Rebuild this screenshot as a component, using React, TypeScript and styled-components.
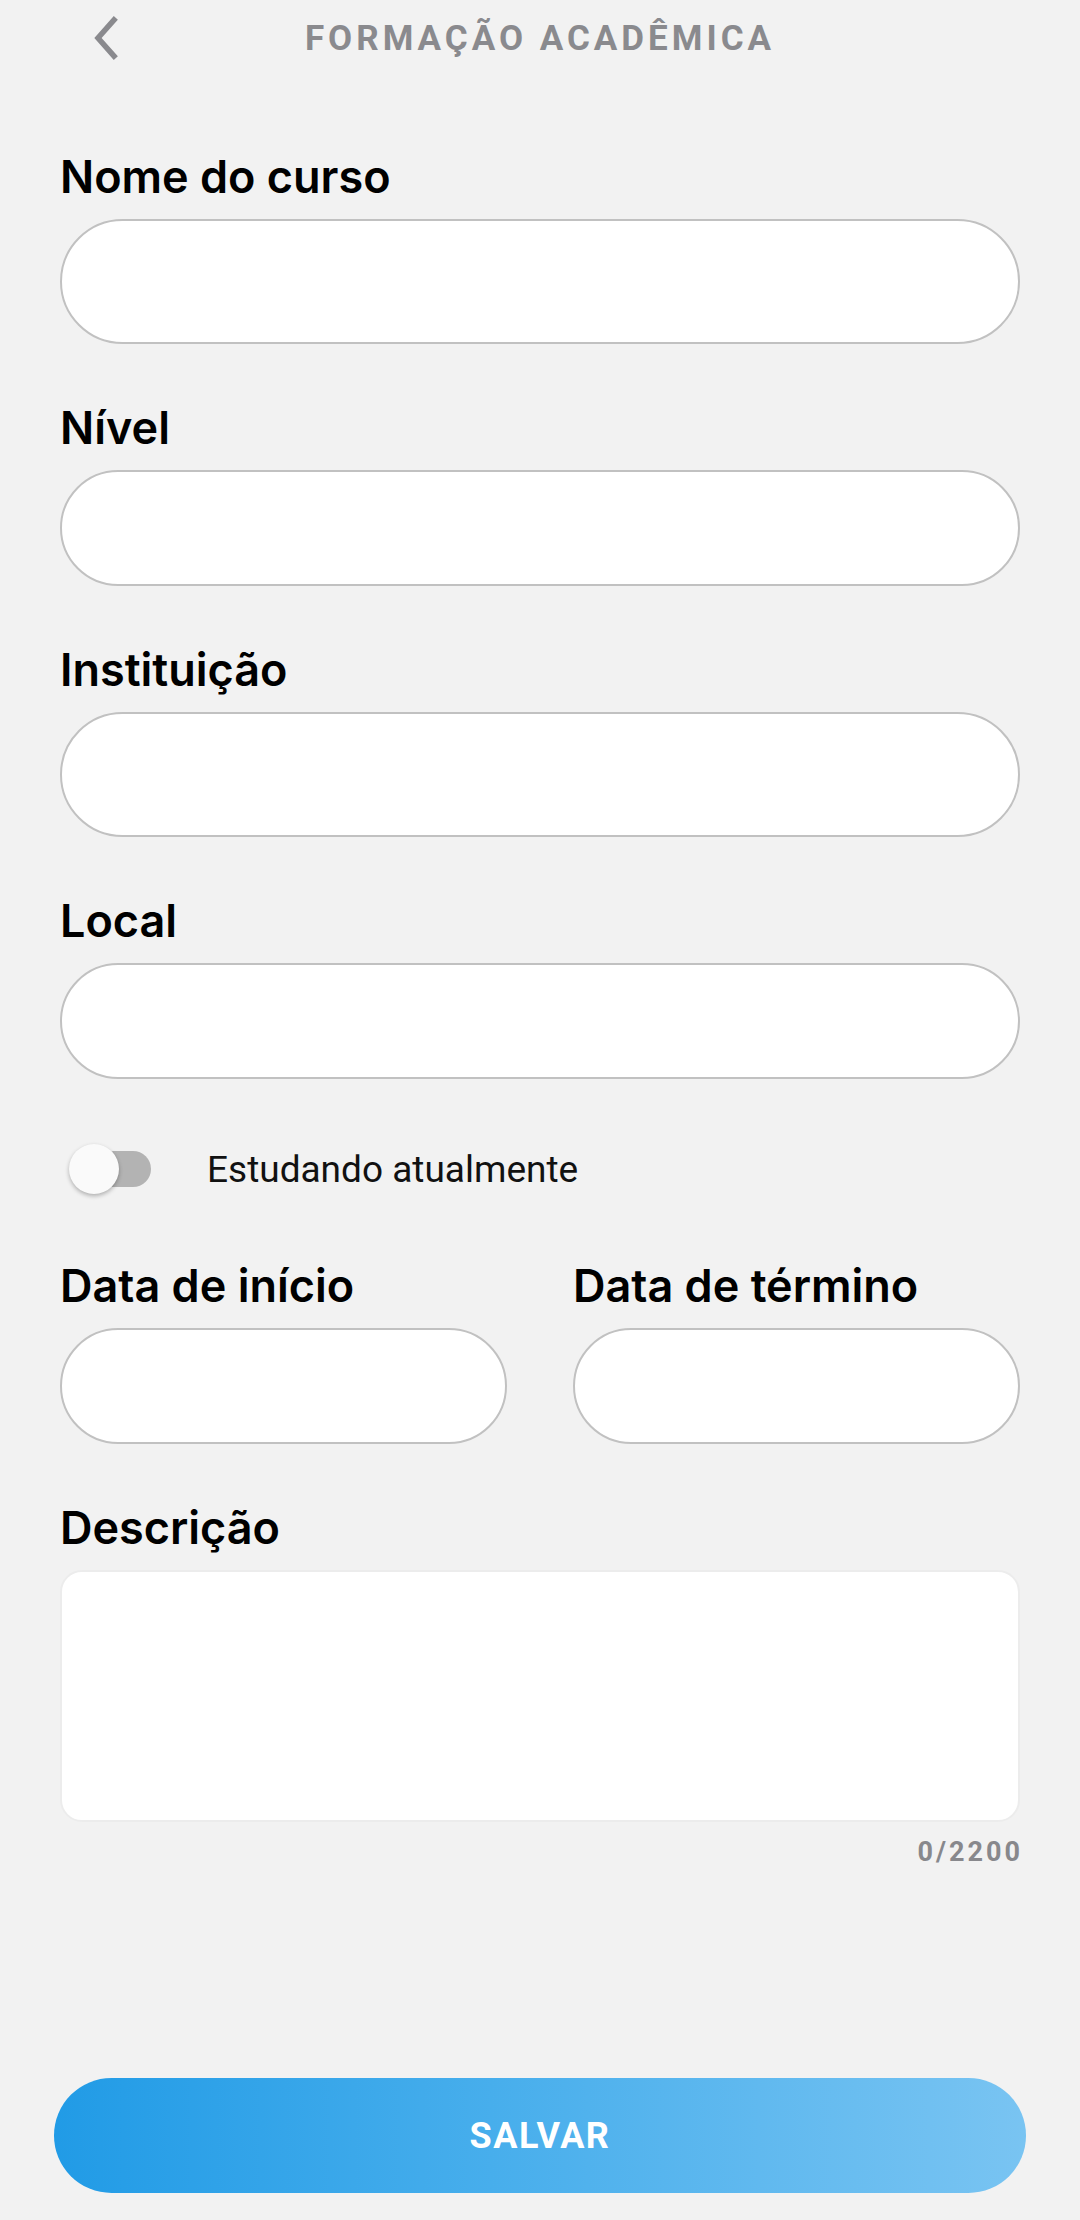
import React from "react";
import styled, { createGlobalStyle } from "styled-components";

const GlobalStyle = createGlobalStyle`
  html, body {
    margin: 0;
    padding: 0;
    background: #f2f2f2;
  }
  body {
    font-family: Roboto, "Noto Sans", "Liberation Sans", sans-serif;
  }
  * { box-sizing: border-box; }
`;

const Page = styled.div`
  min-height: 2220px;
  display: flex;
  flex-direction: column;
  background: #f2f2f2;
  padding-bottom: 27px;
`;

const Header = styled.header`
  height: 76px;
  display: grid;
  grid-template-columns: 150px 1fr 150px;
  align-items: center;
`;

const BackButton = styled.button`
  justify-self: start;
  margin-left: 88px;
  width: 36px;
  height: 48px;
  border: none;
  background: transparent;
  padding: 0;
  display: flex;
  align-items: center;
  justify-content: center;
  cursor: pointer;
`;

const Title = styled.h1`
  margin: 0;
  text-align: center;
  font-family: Roboto, "Liberation Sans", sans-serif;
  font-weight: 700;
  font-size: 35px;
  letter-spacing: 4px;
  color: #8a8a8e;
  line-height: 1;
`;

const Form = styled.form`
  display: flex;
  flex-direction: column;
  gap: 57px;
  padding: 74px 60px 0;
`;

const Field = styled.div`
  display: flex;
  flex-direction: column;
  gap: 15px;
  min-width: 0;
`;

const Label = styled.label`
  font-family: Inter, Roboto, "Liberation Sans", sans-serif;
  font-weight: 600;
  font-size: 45px;
  line-height: 54px;
  color: #000;
`;

const Input = styled.input<{ $tall?: boolean }>`
  width: 100%;
  height: ${(p) => (p.$tall ? "125px" : "116px")};
  border: 2px solid #c1c1c1;
  border-radius: 999px;
  background: #fff;
  padding: 0 40px;
  font-size: 36px;
  font-family: Roboto, sans-serif;
  outline: none;
`;

const ToggleRow = styled.div`
  height: 66px;
  display: flex;
  align-items: center;
  gap: 56px;
  padding-left: 9px;
`;

const Switch = styled.span`
  position: relative;
  width: 82px;
  height: 50px;
  display: inline-block;
  flex-shrink: 0;
`;

const Track = styled.span`
  position: absolute;
  left: 16px;
  right: 0;
  top: 7px;
  height: 36px;
  border-radius: 18px;
  background: #b3b3b3;
`;

const Thumb = styled.span`
  position: absolute;
  left: 0;
  top: 0;
  width: 50px;
  height: 50px;
  border-radius: 50%;
  background: #fafafa;
  box-shadow: 0 2px 4px rgba(0, 0, 0, 0.28);
`;

const ToggleText = styled.span`
  font-family: Roboto, "Liberation Sans", sans-serif;
  font-weight: 400;
  font-size: 37px;
  color: #111;
`;

const DateGrid = styled.div`
  display: grid;
  grid-template-columns: 1fr 1fr;
  column-gap: 66px;
`;

const DescField = styled.div`
  display: flex;
  flex-direction: column;
`;

const TextArea = styled.textarea`
  margin-top: 15px;
  width: 100%;
  height: 252px;
  border: 2px solid #ececec;
  border-radius: 22px;
  background: #fff;
  resize: none;
  outline: none;
  padding: 24px;
  font-family: Roboto, sans-serif;
  font-size: 34px;
`;

const Counter = styled.div`
  align-self: flex-end;
  margin-top: 14px;
  font-family: Roboto, "Liberation Sans", sans-serif;
  font-weight: 700;
  font-size: 27px;
  letter-spacing: 3px;
  margin-right: -3px;
  color: #88888c;
`;

const SaveButton = styled.button`
  margin: auto 54px 0;
  height: 115px;
  border: none;
  border-radius: 999px;
  background: linear-gradient(90deg, #219be6 0%, #47aeec 45%, #79c4f2 100%);
  color: #fff;
  font-family: Roboto, "Liberation Sans", sans-serif;
  font-weight: 700;
  font-size: 36px;
  letter-spacing: 1.5px;
  cursor: pointer;
`;

function ChevronLeft() {
  return (
    <svg width="30" height="44" viewBox="0 0 30 44" fill="none">
      <polyline
        points="23,4 7,22 23,40"
        stroke="#8a8a8e"
        strokeWidth="5.5"
        strokeLinecap="square"
        strokeLinejoin="miter"
        fill="none"
      />
    </svg>
  );
}

export default function App() {
  return (
    <>
      <GlobalStyle />
      <Page>
        <Header>
          <BackButton type="button" aria-label="Voltar">
            <ChevronLeft />
          </BackButton>
          <Title>FORMAÇÃO ACADÊMICA</Title>
          <span />
        </Header>
        <Form onSubmit={(e) => e.preventDefault()}>
          <Field>
            <Label>Nome do curso</Label>
            <Input $tall />
          </Field>
          <Field>
            <Label>Nível</Label>
            <Input />
          </Field>
          <Field>
            <Label>Instituição</Label>
            <Input $tall />
          </Field>
          <Field>
            <Label>Local</Label>
            <Input />
          </Field>
          <ToggleRow>
            <Switch role="switch" aria-checked="false">
              <Track />
              <Thumb />
            </Switch>
            <ToggleText>Estudando atualmente</ToggleText>
          </ToggleRow>
          <DateGrid>
            <Field>
              <Label>Data de início</Label>
              <Input />
            </Field>
            <Field>
              <Label>Data de término</Label>
              <Input />
            </Field>
          </DateGrid>
          <DescField>
            <Label>Descrição</Label>
            <TextArea />
            <Counter>0/2200</Counter>
          </DescField>
        </Form>
        <SaveButton type="button">SALVAR</SaveButton>
      </Page>
    </>
  );
}
